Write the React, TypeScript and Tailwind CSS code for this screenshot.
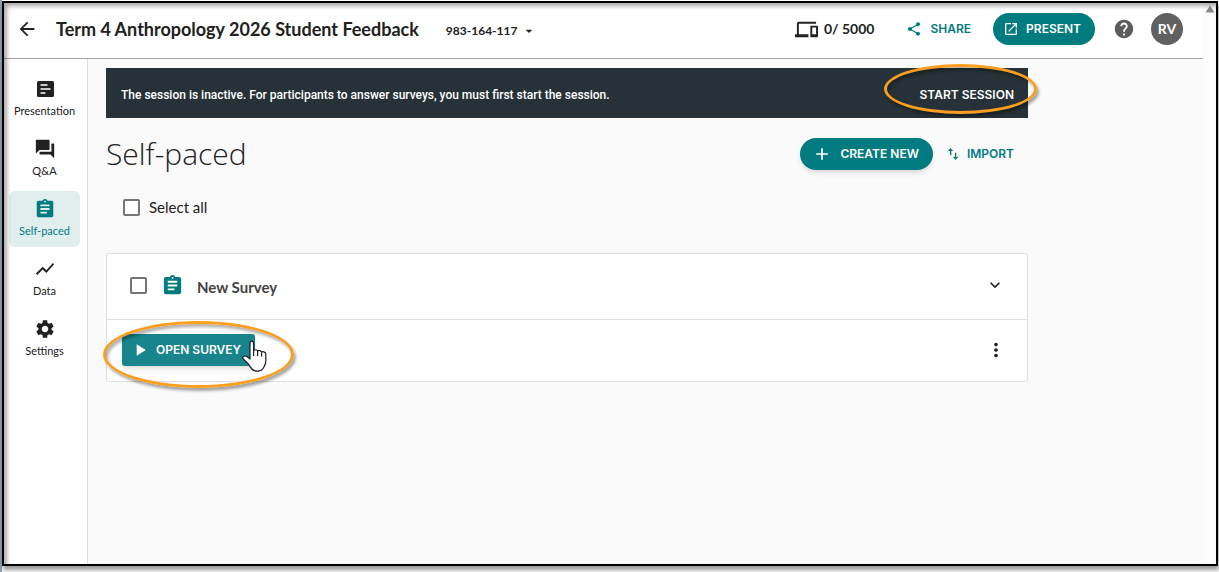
import type { ReactNode } from "react"
import {
  MdAdd,
  MdArrowBack,
  MdArrowDropDown,
  MdAssignment,
  MdDevices,
  MdForum,
  MdHelp,
  MdKeyboardArrowDown,
  MdMoreVert,
  MdOpenInNew,
  MdPlayArrow,
  MdSettings,
  MdShare,
  MdShowChart,
} from "react-icons/md"

function PresentationIcon() {
  return (
    <svg viewBox="0 0 22 22" className="h-[22px] w-[22px]" aria-hidden="true">
      <rect x="3" y="3" width="17" height="16" rx="1.5" fill="currentColor" />
      <path d="M6.500 7h7M6.500 11h10M6.500 15h5" stroke="#fff" strokeWidth="1.700" />
    </svg>
  )
}

function ImportIcon() {
  return (
    <svg viewBox="0 0 12 14" className="h-[14px] w-3" fill="currentColor" aria-hidden="true">
      <path d="M3.600 1 1 3.900h1.900v4.300h1.400V3.900h1.900zM8.600 13l2.600-2.900H9.300V5.800H7.900v4.300H6z" />
    </svg>
  )
}

function HandCursor() {
  return (
    <svg viewBox="0 0 26 33" className="h-[33px] w-[26px]" aria-hidden="true">
      <path
        d="M9 19V3.300C9 .300 12.600 .300 12.600 3.300V11c.500-1.800 3.700-1.600 4 .400.500-1.400 3.600-1.200 4 .900.700-1.200 4.200-.600 4.200 1.800v7c0 3-1.200 4.500-2 6.200-1.300 2.800-3.300 3.900-6.500 3.900-3.500 0-5.500-1.500-7-4.300-1.500-2.900-3.500-5-6.800-7.700-2-2.300.600-4.100 3.300-2.600z"
        fill="#fff"
        stroke="#1b1b2b"
        strokeWidth="1.200"
        strokeLinejoin="round"
      />
      <path d="M12.600 11v5M16.600 11.500v4.500M20.600 12.500v4" stroke="#1b1b2b" strokeWidth="1.200" />
    </svg>
  )
}

const ring =
  "pointer-events-none absolute z-10 rounded-[50%] border-[3px] border-[#fa9e20] shadow-[2px_3px_3px_rgba(0,0,0,0.35),inset_2px_3px_3px_rgba(0,0,0,0.3)]"

const actionText = "font-['Inter',sans-serif] text-xs font-semibold"

const navItems: { label: string; icon: ReactNode; active?: boolean }[] = [
  { label: "Presentation", icon: <PresentationIcon /> },
  { label: "Q&A", icon: <MdForum className="h-[22px] w-[22px]" /> },
  { label: "Self-paced", icon: <MdAssignment className="h-[22px] w-[22px]" />, active: true },
  { label: "Data", icon: <MdShowChart className="h-[22px] w-[22px]" /> },
  { label: "Settings", icon: <MdSettings className="h-[22px] w-[22px]" /> },
]

function Checkbox({ id, label }: { id: string; label?: string }) {
  return (
    <input
      id={id}
      type="checkbox"
      aria-label={label}
      className="h-[17px] w-[17px] shrink-0 appearance-none rounded-[2px] border-2 border-[#757575] bg-white checked:bg-[#007b80]"
    />
  )
}

function Header() {
  return (
    <header className="flex items-center border-b border-[#a3a3a3] bg-white pt-[10px] pr-5 pb-[13px] pl-3">
      <button aria-label="Back">
        <MdArrowBack className="h-[22px] w-[22px]" />
      </button>
      <h1 className="ml-[18px] text-lg leading-8 font-bold whitespace-nowrap">
        Term 4 Anthropology 2026 Student Feedback
      </h1>
      <button className="ml-[27px] flex items-center gap-1 pt-1 text-xs font-bold">
        983-164-117
        <MdArrowDropDown className="h-4 w-4" />
      </button>
      <div className="ml-auto flex items-center">
        <span className="flex items-center gap-1.5 text-sm font-bold">
          <MdDevices className="h-[23px] w-[23px]" />
          0/ 5000
        </span>
        <button className={`${actionText} ml-8 flex items-center gap-2 text-[#007b80]`}>
          <MdShare className="h-4 w-4" />
          SHARE
        </button>
        <button className={`${actionText} ml-[22px] flex h-8 items-center gap-[7px] rounded-full bg-[#007b80] pr-[14px] pl-[10px] text-white`}>
          <MdOpenInNew className="h-4 w-4" />
          PRESENT
        </button>
        <button aria-label="Help" className="ml-[18px] text-[#5c5c5c]">
          <MdHelp className="h-[22px] w-[22px]" />
        </button>
        <button className="ml-4 h-8 w-8 rounded-full bg-[#616161] text-sm font-bold text-white">RV</button>
      </div>
    </header>
  )
}

function Sidebar() {
  return (
    <nav className="flex w-[84px] shrink-0 flex-col gap-1 border-r border-[#dedede] bg-white pt-3 pr-[7px] pl-[5px]">
      {navItems.map((item) => (
        <a
          key={item.label}
          href="#"
          className={
            item.active
              ? "flex flex-col items-center gap-[3px] rounded-md bg-[#e0eeee] pt-[7px] pb-2 text-[11px] leading-4 text-[#007b80]"
              : "flex flex-col items-center gap-[3px] rounded-md pt-[7px] pb-2 text-[11px] leading-4"
          }
        >
          {item.icon}
          {item.label}
        </a>
      ))}
    </nav>
  )
}

function SurveyCard() {
  return (
    <section className="mt-9 rounded-[3px] border border-[#e0e0e0] bg-white">
      <div className="flex h-[66px] items-center border-b border-[#e0e0e0] pr-[22px] pb-[3px] pl-[23px]">
        <Checkbox id="survey" label="Select New Survey" />
        <MdAssignment className="ml-[14px] h-[23px] w-[23px] text-[#007b80]" />
        <h3 className="ml-[13px] pt-1 text-[15px] font-bold text-[#424242]">New Survey</h3>
        <button aria-label="Expand" className="ml-auto">
          <MdKeyboardArrowDown className="h-5 w-5" />
        </button>
      </div>
      <div className="flex items-center justify-between pt-[14px] pr-5 pb-[15px] pl-[15px]">
        <div className="relative">
          <button className={`${actionText} flex h-8 w-[133px] items-center gap-1.5 rounded-[3px] bg-[#17858b] pl-2 text-white shadow-md`}>
            <MdPlayArrow className="h-5 w-5" />
            OPEN SURVEY
          </button>
          <div className={`${ring} -top-[13px] -left-[19px] h-[67px] w-[191px]`} />
          <div className="pointer-events-none absolute top-[6px] left-[119px] z-20">
            <HandCursor />
          </div>
        </div>
        <button aria-label="More options">
          <MdMoreVert className="h-[22px] w-[22px]" />
        </button>
      </div>
    </section>
  )
}

export default function App() {
  return (
    <div className="flex min-h-screen flex-col border-l-2 border-[#8ba0ae] bg-white pt-px pr-px pb-[6px] font-['Lato','Open_Sans',sans-serif] text-[#212121]">
      <div className="relative flex flex-1 border-2 border-black bg-[#fafafa] shadow-[1px_4px_4px_rgba(0,0,0,0.4)]">
        <div className="flex min-w-0 flex-1 flex-col">
          <Header />
          <div className="flex flex-1">
            <Sidebar />
            <main className="flex-1 pt-[9px] pl-[18px]">
              <div className="max-w-[922px]">
                <div className="relative flex h-[50px] items-center justify-between bg-[#263238] pt-[3px] pr-[14px] pl-[15px] text-white">
                  <p className="font-['Roboto',sans-serif] text-xs font-medium">
                    The session is inactive. For participants to answer surveys, you must first start the session.
                  </p>
                  <button className={actionText}>START SESSION</button>
                  <div className={`${ring} -top-1 -right-[9px] h-[50px] w-[153px]`} />
                </div>
                <div className="mt-5 flex h-8 items-center">
                  <h2 className="font-['Open_Sans',sans-serif] text-3xl font-light">Self-paced</h2>
                  <button className={`${actionText} ml-auto flex h-8 items-center gap-2 rounded-full bg-[#007b80] pr-[14px] pl-3 text-white shadow-md`}>
                    <MdAdd className="h-5 w-5" />
                    CREATE NEW
                  </button>
                  <button className={`${actionText} mr-[14px] ml-[14px] flex items-center gap-2 text-[#007b80]`}>
                    <ImportIcon />
                    IMPORT
                  </button>
                </div>
                <div className="mt-[27px] flex items-center gap-[9px] pl-[17px]">
                  <Checkbox id="all" />
                  <label htmlFor="all" className="text-[15px] leading-5">
                    Select all
                  </label>
                </div>
                <SurveyCard />
              </div>
            </main>
          </div>
        </div>
        <div className="flex w-[13px] shrink-0 justify-center bg-[#fcfcfc] pt-[2px]">
          <svg viewBox="0 0 10 8" className="h-2 w-[10px]" aria-hidden="true">
            <path d="M5 0.500 9.500 7.500h-9z" fill="#8b8b8b" />
          </svg>
        </div>
        <div className="pointer-events-none absolute inset-0 shadow-[inset_3px_3px_4px_rgba(0,0,0,0.35)]" />
      </div>
    </div>
  )
}
